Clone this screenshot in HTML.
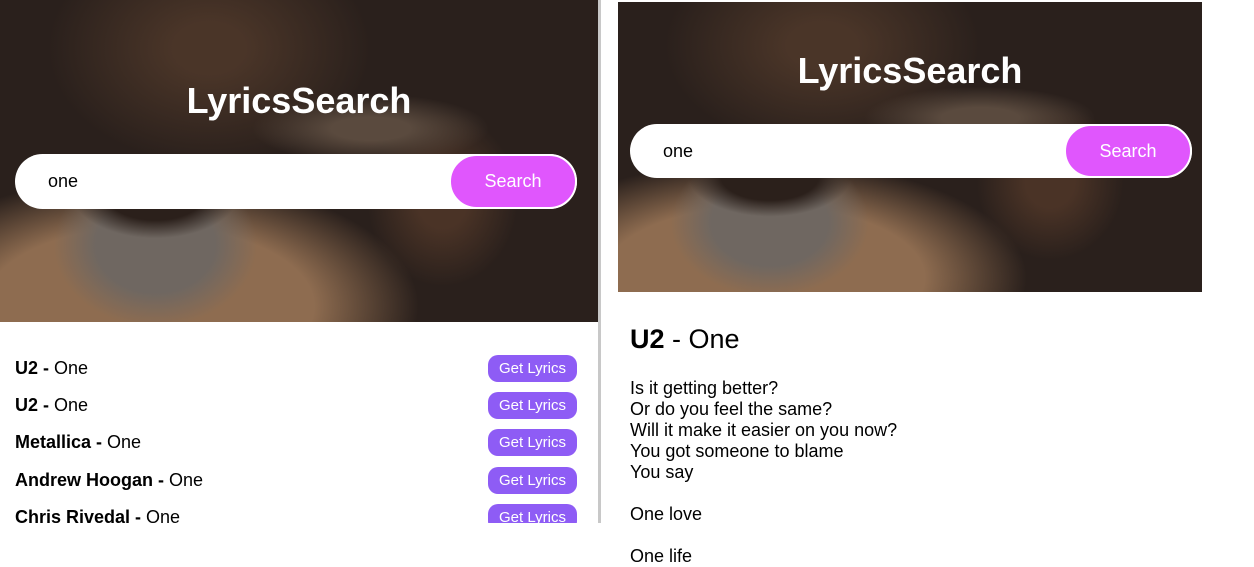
<!DOCTYPE html>
<html><head><meta charset="utf-8"><style>
*{box-sizing:border-box;margin:0;padding:0}
body{width:1254px;height:562px;overflow:hidden;background:#fff;font-family:"Liberation Sans",Arial,sans-serif;position:relative}
.bg{position:absolute;overflow:hidden;background:
radial-gradient(ellipse 14% 14% at 26% 60%,#2b201b 60%,transparent 100%),
radial-gradient(ellipse 20% 30% at 26% 76%,#6f6761 50%,transparent 85%),
radial-gradient(ellipse 50% 45% at 25% 95%,#8e6c50 55%,transparent 90%),
radial-gradient(ellipse 22% 12% at 62% 40%,#5a4a3e 30%,transparent 90%),
radial-gradient(ellipse 14% 30% at 74% 62%,#4a3326 30%,transparent 90%),
radial-gradient(ellipse 30% 40% at 35% 15%,#4a3528 20%,transparent 90%),
#2a201c}
.bg h1{position:absolute;left:0;right:0;text-align:center;color:#fff;font-size:36px;font-weight:bold}
.sb{position:absolute;background:#fff;border-radius:28px;height:55px}
.sb span{position:absolute;left:33px;top:17px;font-size:18px;color:#000}
.sb b{position:absolute;right:0;top:0;bottom:0;width:128px;background:#e056fd;border:2px solid #fff;border-radius:28px;color:#fff;font-weight:normal;font-size:18px;text-align:center;line-height:50px}
.row{position:absolute;left:15px;width:562px;font-size:18px;color:#000}
.row a{position:absolute;right:0;top:-3px;width:89px;height:27px;border-radius:10px;background:#8e5cf5;color:#fff;font-size:15px;text-align:center;line-height:27px}
.lyr{position:absolute;left:630px;top:378px;font-size:18px;line-height:21px;color:#000}
</style></head><body>
<div class="bg" style="left:0;top:0;width:598px;height:322px">
<h1 style="top:80px">LyricsSearch</h1>
<div class="sb" style="left:15px;top:154px;width:562px"><span>one</span><b>Search</b></div>
</div>
<div style="position:absolute;left:598px;top:0;width:3px;height:523px;background:#c8c8c8"></div>
<div style="position:absolute;left:0;top:322px;width:598px;height:201px;overflow:hidden">
<div class="row" style="top:36px"><b>U2 -</b> One<a>Get Lyrics</a></div>
<div class="row" style="top:73px"><b>U2 -</b> One<a>Get Lyrics</a></div>
<div class="row" style="top:110px"><b>Metallica -</b> One<a>Get Lyrics</a></div>
<div class="row" style="top:148px"><b>Andrew Hoogan -</b> One<a>Get Lyrics</a></div>
<div class="row" style="top:185px"><b>Chris Rivedal -</b> One<a>Get Lyrics</a></div>
</div>
<div class="bg" style="left:618px;top:2px;width:584px;height:290px">
<h1 style="top:48px">LyricsSearch</h1>
<div class="sb" style="left:12px;top:122px;width:562px;height:54px"><span>one</span><b>Search</b></div>
</div>
<div style="position:absolute;left:630px;top:324px;font-size:27px"><b>U2</b> - One</div>
<div class="lyr">Is it getting better?<br>Or do you feel the same?<br>Will it make it easier on you now?<br>You got someone to blame<br>You say<br><br>One love<br><br>One life</div>
</body></html>
